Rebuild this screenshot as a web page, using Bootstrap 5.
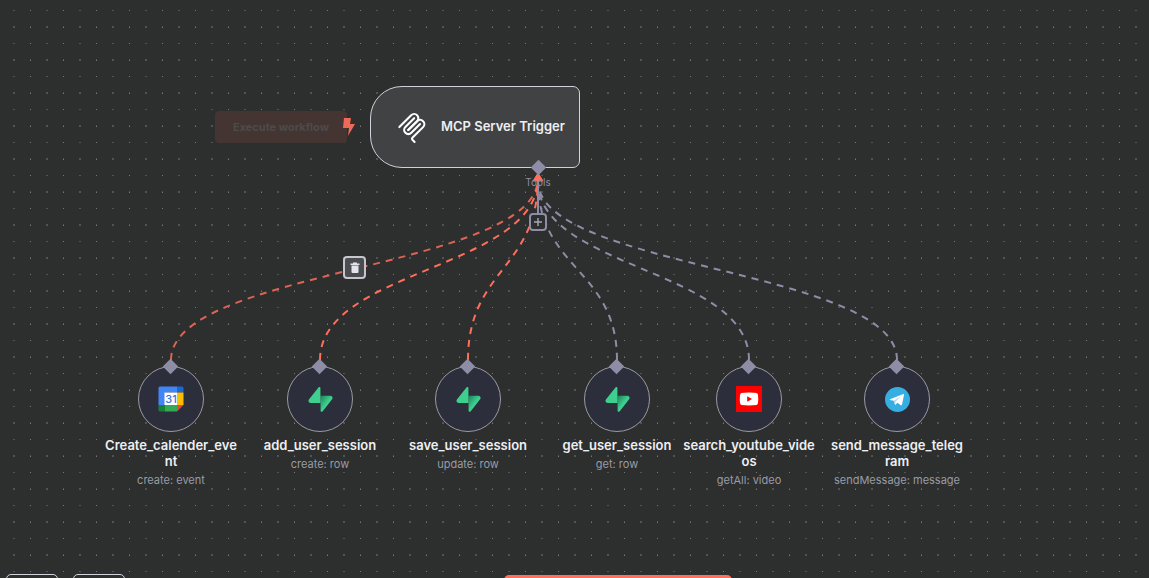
<!DOCTYPE html>
<html lang="en" data-bs-theme="dark">
<head>
<meta charset="utf-8">
<meta name="viewport" content="width=device-width, initial-scale=1">
<title>MCP Server workflow</title>
<link rel="stylesheet" href="https://cdn.jsdelivr.net/npm/bootstrap@5.3.0/dist/css/bootstrap.min.css">
<script src="https://cdn.jsdelivr.net/npm/bootstrap@5.3.0/dist/js/bootstrap.bundle.min.js"></script>
<style>
  body { background: #2d2e2e; font-family: Inter, "Liberation Sans", sans-serif; }
  .flow-canvas { color: #eeeff3; }
  .wires { pointer-events: none; }
  .wire { fill: none; stroke: #8d8da6; stroke-width: 2; stroke-dasharray: 7 6; }
  .wire-hot { stroke: #ff6f5c; }
  .wire-hover { stroke: #dc6454; }
  .flow-node { position: absolute; width: 134px; top: 366px; }
  .disc { width: 66px; height: 66px; background: #2d2e3c; border: 1px solid #9a9aa0; }
  .port { position: absolute; width: 11px; height: 11px; background: #8d8da6; transform: rotate(45deg); }
  .flow-node .port { top: -5px; left: 61px; }
  .node-name { font-size: 13px; line-height: 16px; font-weight: 600; word-break: break-all; margin-top: 5px; }
  .node-sub { font-size: 11px; line-height: 16px; color: #989ca5; margin-top: 3px; }
  .trigger { position: absolute; left: 370px; top: 86px; width: 210px; height: 82px; padding-left: 24px;
    background: #414244; border: 1px solid #d0d1de; border-radius: 32px 7px 7px 32px; }
  .trigger-name { font-size: 13px; font-weight: 600; margin-left: 12px; }
  .trigger .port { left: 162px; bottom: -6px; }
  .run-btn { position: absolute; left: 215px; top: 111px; width: 132px; height: 32px; border: 0; border-radius: 4px;
    font-size: 11px; font-weight: 700; background: #443533; color: #4c4b4b; }
  .bolt { position: absolute; left: 343px; top: 117px; }
  .tools-label { position: absolute; left: 518px; top: 176px; width: 40px; font-size: 10px; line-height: 13px; color: #8d8da6; }
  .add-btn { position: absolute; left: 529px; top: 213px; width: 18px; height: 18px; border: 2px solid #8d8da6; border-radius: 4px; background: #2d2e2e; }
  .trash-btn { position: absolute; left: 343px; top: 256px; width: 23px; height: 23px; border: 2px solid #c5c6ce; border-radius: 4px; background: #4b4c50; }
  .dock { position: absolute; inset: auto 0 0 0; height: 4px; padding-left: 6px; gap: 15px; }
  .dock button { height: 32px; width: 52px; flex: none; border: 1px solid #d2d3dc; border-radius: 5px; background: #2d2e2e; }
  .dock .dock-run { width: 228px; border: 0; background: #ff6f5c; margin: 1px 0 0 364px; }
</style>
</head>
<body>
<main class="flow-canvas position-relative vh-100 overflow-hidden">
  <svg class="wires position-absolute top-0 start-0 w-100 h-100" aria-hidden="true">
    <defs>
      <pattern id="grid" width="33" height="33" patternUnits="userSpaceOnUse" x="13" y="10">
        <g fill="#898a8a">
          <path d="M17 0h1v1h-1zM17 17h1v1h-1z" opacity=".8"/>
          <path d="M0 0h2v1H0zM0 16h2v2H0zM17 16h1v1h-1z" opacity=".4"/>
        </g>
      </pattern>
      <linearGradient id="supaShade" x1="0" y1="0" x2="1" y2="1">
        <stop offset="0" stop-color="#1c8055"/><stop offset=".5" stop-color="#3ecf8e"/>
      </linearGradient>
      <symbol id="supabase" viewBox="0 0 109 113">
        <path fill="url(#supaShade)" d="M63.7 110.3C60.8 113.9 55 111.9 55 107.3L54 40.1H99.2C107.4 40.1 112 49.5 106.9 55.9Z"/>
        <path fill="#3ecf8e" d="M45.3 2.1C48.2-1.5 54 .4 54 5L54.5 72.3H9.8C1.6 72.3-2.9 62.8 2.2 56.4Z"/>
      </symbol>
    </defs>
    <rect width="100%" height="100%" fill="url(#grid)"/>
    <path class="wire wire-hover" d="M171 360C171 269 538 269 538 178"/>
    <path class="wire wire-hot" d="M320 360C320 269 538 269 538 178"/>
    <path class="wire wire-hot" d="M468 360C468 269 538 269 538 178"/>
    <path class="wire" d="M617 360C617 269 538 269 538 181"/>
    <path class="wire" d="M749 360C749 269 538 269 538 181"/>
    <path class="wire" d="M897 360C897 269 538 269 538 181"/>
    <path d="M538 187V214" stroke="#8d8da6" stroke-width="2"/>
    <path d="M538 173L543 181H533Z" fill="#ff6f5c" stroke="#ff6f5c" stroke-linejoin="round"/>
  </svg>

  <button class="run-btn p-0" type="button">Execute workflow</button>
  <svg class="bolt" width="12" height="19" viewBox="0 0 12 19" aria-hidden="true"><path fill="#ee6a58" d="M1 1H8L7 7H12L5 19L6 11H0Z"/></svg>

  <section class="trigger d-flex align-items-center">
    <svg width="34" height="34" viewBox="0 0 195 195" fill="none" stroke="#fff" stroke-width="12" stroke-linecap="round" aria-hidden="true">
      <path d="M25 97.85L92.88 29.97C102.26 20.6 117.45 20.6 126.82 29.97C136.2 39.34 136.2 54.54 126.82 63.91L75.56 115.18"/>
      <path d="M76.27 114.47L126.82 63.91C136.2 54.54 151.39 54.54 160.77 63.91L161.12 64.27C170.49 73.64 170.49 88.83 161.12 98.21L99.72 159.6C96.6 162.72 96.6 167.79 99.72 170.91L112.33 183.52"/>
      <path d="M109.85 46.94L59.65 97.15C50.28 106.52 50.28 121.71 59.65 131.09C69.02 140.46 84.22 140.46 93.59 131.09L143.79 80.88"/>
    </svg>
    <span class="trigger-name text-nowrap">MCP Server Trigger</span>
    <span class="port"></span>
  </section>
  <span class="tools-label text-center">Tools</span>
  <button class="add-btn p-0 d-flex align-items-center justify-content-center" type="button" aria-label="Add tool">
    <svg width="10" height="10" viewBox="0 0 10 10" stroke="#a5a5b8" stroke-width="1.4"><path d="M5 1V9M1 5H9"/></svg>
  </button>
  <button class="trash-btn p-0 d-flex align-items-center justify-content-center" type="button" aria-label="Delete connection">
    <svg width="10" height="12" viewBox="0 0 10 12" fill="#e4e5ec"><path d="M3 .5H7V1.500H9.500V3H.5V1.500H3ZM1.500 3.500H8.500V10Q8.500 11 7.500 11H2.500Q1.500 11 1.500 10Z"/></svg>
  </button>

  <article class="flow-node text-center" style="left:104px">
    <div class="disc rounded-circle mx-auto d-flex align-items-center justify-content-center">
      <svg width="26" height="26" viewBox="0 0 26 26" aria-hidden="true">
        <path fill="#4285f4" d="M2 .5H19V6.500H7V19H.5V2Q.5.5 2 .5Z"/>
        <path fill="#1967d2" d="M19 .5H24Q25.500.5 25.500 2V6.500H19Z"/>
        <path fill="#fbbc04" d="M19 6.500H25.500V19H19Z"/>
        <path fill="#34a853" d="M7 19H19V25.500H7Z"/>
        <path fill="#188038" d="M.5 19H7V25.500H2Q.5 25.500.5 24Z"/>
        <path fill="#ea4335" d="M19 19H25.500L19 25.500Z"/>
        <path fill="#fff" d="M6.500 6.500H19V19H6.500Z"/>
        <text x="13" y="17" text-anchor="middle" font-size="11" font-weight="500" fill="#2f75e8">31</text>
      </svg>
    </div>
    <span class="port"></span>
    <div class="node-name">Create_calender_event</div>
    <div class="node-sub">create: event</div>
  </article>

  <article class="flow-node text-center" style="left:253px">
    <div class="disc rounded-circle mx-auto d-flex align-items-center justify-content-center"><svg width="25" height="25" aria-hidden="true"><use href="#supabase"/></svg></div>
    <span class="port"></span>
    <div class="node-name">add_user_session</div>
    <div class="node-sub">create: row</div>
  </article>

  <article class="flow-node text-center" style="left:401px">
    <div class="disc rounded-circle mx-auto d-flex align-items-center justify-content-center"><svg width="25" height="25" aria-hidden="true"><use href="#supabase"/></svg></div>
    <span class="port"></span>
    <div class="node-name">save_user_session</div>
    <div class="node-sub">update: row</div>
  </article>

  <article class="flow-node text-center" style="left:550px">
    <div class="disc rounded-circle mx-auto d-flex align-items-center justify-content-center"><svg width="25" height="25" aria-hidden="true"><use href="#supabase"/></svg></div>
    <span class="port"></span>
    <div class="node-name">get_user_session</div>
    <div class="node-sub">get: row</div>
  </article>

  <article class="flow-node text-center" style="left:682px">
    <div class="disc rounded-circle mx-auto d-flex align-items-center justify-content-center">
      <svg width="26" height="26" viewBox="0 0 26 26" aria-hidden="true">
        <path fill="#f00" d="M0 0H26V26H0Z"/>
        <path fill="#fff" d="M13 6.500Q19 6.500 20.500 7Q22 7.400 22 9Q22.500 13 22 17Q21.800 18.600 20.500 19Q13 19.800 5.500 19Q4.200 18.600 4 17Q3.500 13 4 9Q4.200 7.400 5.500 7Q7 6.500 13 6.500Z"/>
        <path fill="#f00" d="M11.200 10.200L16 13L11.200 15.800Z"/>
      </svg>
    </div>
    <span class="port"></span>
    <div class="node-name">search_youtube_videos</div>
    <div class="node-sub">getAll: video</div>
  </article>

  <article class="flow-node text-center" style="left:830px">
    <div class="disc rounded-circle mx-auto d-flex align-items-center justify-content-center">
      <svg width="25" height="25" viewBox="0 0 25 25" aria-hidden="true">
        <circle cx="12.500" cy="12.500" r="12.500" fill="#37aee2"/>
        <path fill="#fff" d="M5 12.300L18.300 7Q19.300 6.700 19 8L17 17.600Q16.700 18.900 15.500 18.100L12.400 15.800L10.800 17.600Q10.200 18.300 9.900 17.300L8.700 13.700L5 12.900Q4.500 12.600 5 12.300Z"/>
        <path fill="#b6d9ec" d="M8.700 13.700L16.500 8.800L10.700 14.500L10.200 17.800Z"/>
      </svg>
    </div>
    <span class="port"></span>
    <div class="node-name">send_message_telegram</div>
    <div class="node-sub">sendMessage: message</div>
  </article>

  <footer class="dock d-flex align-items-start overflow-hidden">
    <button type="button" aria-label="Fit view"></button>
    <button type="button" aria-label="Zoom"></button>
    <button type="button" class="dock-run" aria-label="Run"></button>
  </footer>
</main>
</body>
</html>
